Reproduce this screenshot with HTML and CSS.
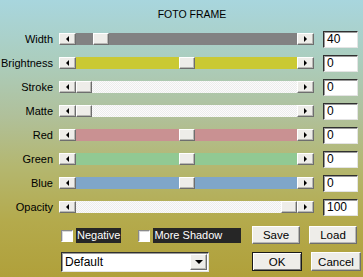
FILE: index.html
```html
<!DOCTYPE html>
<html>
<head>
<meta charset="utf-8">
<link rel="stylesheet" href="styles.css">
</head>
<body>
<div class="dialog">
  <h1 class="title">FOTO FRAME</h1>
  <div class="rows">
    <div class="row">
      <span class="label">Width</span>
      <div class="slider"><span class="arrow"><i class="tri-left"></i></span><div class="track grey"><span class="thumb" style="margin-left:17px"></span></div><span class="arrow"><i class="tri-right"></i></span></div>
      <span class="field">40</span>
    </div>
    <div class="row">
      <span class="label">Brightness</span>
      <div class="slider"><span class="arrow"><i class="tri-left"></i></span><div class="track yellow"><span class="thumb" style="margin-left:103px"></span></div><span class="arrow"><i class="tri-right"></i></span></div>
      <span class="field">0</span>
    </div>
    <div class="row">
      <span class="label">Stroke</span>
      <div class="slider"><span class="arrow"><i class="tri-left"></i></span><div class="track white"><span class="thumb" style="margin-left:0px"></span></div><span class="arrow"><i class="tri-right"></i></span></div>
      <span class="field">0</span>
    </div>
    <div class="row">
      <span class="label">Matte</span>
      <div class="slider"><span class="arrow"><i class="tri-left"></i></span><div class="track white"><span class="thumb" style="margin-left:0px"></span></div><span class="arrow"><i class="tri-right"></i></span></div>
      <span class="field">0</span>
    </div>
    <div class="row">
      <span class="label">Red</span>
      <div class="slider"><span class="arrow"><i class="tri-left"></i></span><div class="track red"><span class="thumb" style="margin-left:103px"></span></div><span class="arrow"><i class="tri-right"></i></span></div>
      <span class="field">0</span>
    </div>
    <div class="row">
      <span class="label">Green</span>
      <div class="slider"><span class="arrow"><i class="tri-left"></i></span><div class="track green"><span class="thumb" style="margin-left:103px"></span></div><span class="arrow"><i class="tri-right"></i></span></div>
      <span class="field">0</span>
    </div>
    <div class="row">
      <span class="label">Blue</span>
      <div class="slider"><span class="arrow"><i class="tri-left"></i></span><div class="track blue"><span class="thumb" style="margin-left:103px"></span></div><span class="arrow"><i class="tri-right"></i></span></div>
      <span class="field">0</span>
    </div>
    <div class="row">
      <span class="label">Opacity</span>
      <div class="slider"><span class="arrow"><i class="tri-left"></i></span><div class="track white"><span class="thumb" style="margin-left:205px"></span></div><span class="arrow"><i class="tri-right"></i></span></div>
      <span class="field">100</span>
    </div>
  </div>
  <div class="bottom">
    <div class="left-col">
      <div class="checks">
        <span class="check"></span><span class="check-label neg">Negative</span>
        <span class="check second"></span><span class="check-label shadow">More Shadow</span>
      </div>
      <div class="select"><span class="select-text">Default</span><span class="select-btn"><i class="tri-down"></i></span></div>
    </div>
    <div class="right-col">
      <div class="btn-row">
        <span class="btn">Save</span><span class="btn">Load</span>
      </div>
      <div class="btn-row second-row">
        <span class="btn big default">OK</span><span class="btn big">Cancel</span>
      </div>
    </div>
  </div>
</div>
</body>
</html>
```

FILE: styles.css
```css
* { box-sizing: border-box; }

html, body {
  margin: 0;
  padding: 0;
}

body {
  width: 363px;
  height: 277px;
  overflow: hidden;
  background: linear-gradient(180deg, #a8d6de 0%, #abcdbd 22%, #b0c09a 42%, #b4b770 60%, #b4aa4c 80%, #b0a03a 100%);
  font-family: "Liberation Sans", Arial, sans-serif;
  font-size: 11px;
  color: #000;
}

.dialog {
  display: flex;
  flex-direction: column;
  height: 277px;
}

.title {
  margin: 0;
  height: 27px;
  padding: 8px 0 0 21px;
  font-size: 10.5px;
  line-height: 12px;
  font-weight: normal;
  text-align: center;
}

.rows {
  display: flex;
  flex-direction: column;
}

.row {
  display: flex;
  align-items: center;
  height: 24px;
}

.label {
  width: 53px;
  margin-right: 6px;
  text-align: right;
  line-height: 13px;
}

.slider {
  display: flex;
  width: 255px;
  height: 12px;
}

.arrow, .thumb, .btn, .select-btn {
  background: #eeede9;
  border: 1px solid;
  border-color: #ffffff #6e6e6e #6e6e6e #ffffff;
  box-shadow: inset -1px -1px 0 #b8b8b4;
}

.arrow {
  width: 17px;
  height: 12px;
  display: flex;
  align-items: center;
  justify-content: center;
  flex: none;
}

.tri-left {
  width: 0;
  height: 0;
  border-top: 3px solid transparent;
  border-bottom: 3px solid transparent;
  border-right: 3px solid #000;
}

.tri-right {
  width: 0;
  height: 0;
  border-top: 3px solid transparent;
  border-bottom: 3px solid transparent;
  border-left: 3px solid #000;
}

.tri-down {
  width: 0;
  height: 0;
  border-left: 4px solid transparent;
  border-right: 4px solid transparent;
  border-top: 4px solid #000;
}

.track {
  flex: 1;
  display: flex;
  height: 12px;
}

.thumb {
  width: 16px;
  height: 12px;
  flex: none;
}

.grey { background: #828282; }
.yellow { background: #cac933; }
.red { background: #c99192; }
.green { background: #91c993; }
.blue { background: #7fa6c9; }
.white {
  background: repeating-conic-gradient(#ececec 0 25%, #fbfbfb 0 50%) 0 0 / 2px 2px;
}

.field {
  margin-left: 9px;
  width: 35px;
  height: 17px;
  background: #fff;
  border: 1px solid;
  border-color: #303030 #e4e4e4 #e4e4e4 #303030;
  box-shadow: inset 1px 1px 0 #9a9a9a;
  padding-left: 3px;
  font-size: 12px;
  line-height: 15px;
}

.bottom {
  display: flex;
  padding-left: 61px;
  margin-top: 7px;
  column-gap: 11px;
}

.left-col {
  width: 180px;
  display: flex;
  flex-direction: column;
  row-gap: 7px;
}

.checks {
  display: flex;
  align-items: center;
  height: 19px;
}

.check {
  width: 12px;
  height: 12px;
  background: #fff;
  border: 1px solid;
  border-color: #8a8a8a #ffffff #ffffff #8a8a8a;
  box-shadow: inset 1px 1px 0 #d8d8d8;
  flex: none;
}

.check.second {
  margin-left: 17px;
}

.check-label {
  margin-left: 3px;
  height: 15px;
  line-height: 15px;
  background: #262626;
  color: #fff;
  padding: 0 1px;
  font-size: 11px;
}

.check-label.shadow {
  width: 90px;
}

.select {
  width: 148px;
  height: 20px;
  background: #fff;
  border: 1px solid;
  border-color: #303030 #e4e4e4 #e4e4e4 #303030;
  box-shadow: inset 1px 1px 0 #9a9a9a;
  display: flex;
  align-items: center;
  justify-content: space-between;
  padding: 1px 1px 1px 3px;
}

.select-text {
  font-size: 12px;
}

.select-btn {
  width: 17px;
  height: 16px;
  display: flex;
  align-items: center;
  justify-content: center;
}

.right-col {
  display: flex;
  flex-direction: column;
  row-gap: 7px;
}

.btn-row {
  display: flex;
  column-gap: 9px;
  height: 19px;
  align-items: flex-start;
}

.second-row {
  height: 20px;
}

.btn {
  width: 48px;
  height: 18px;
  display: flex;
  align-items: center;
  justify-content: center;
  font-size: 11.5px;
}

.btn.big {
  width: 50px;
  height: 19px;
}

.btn.default {
  border: 1px solid #1a1a1a;
  box-shadow: inset 1px 1px 0 #ffffff, inset -1px -1px 0 #7a7a7a;
}
```
